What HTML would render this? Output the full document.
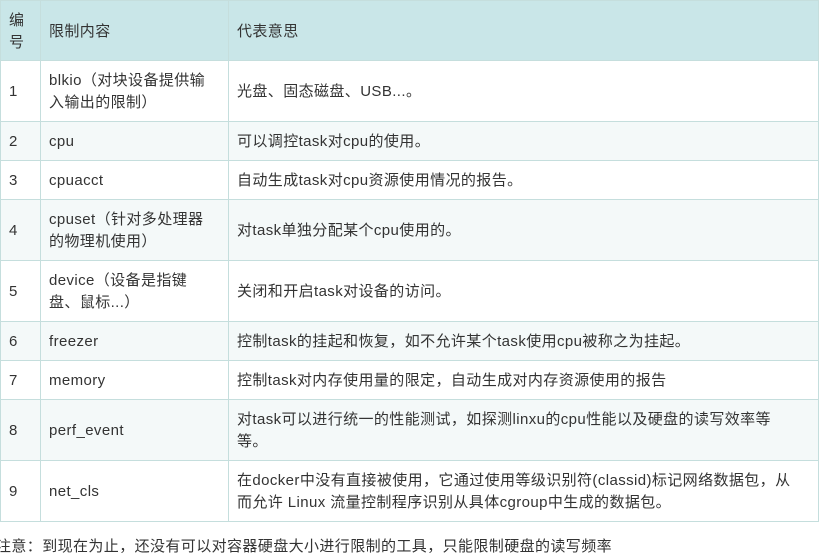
<!DOCTYPE html>
<html><head><meta charset="utf-8"><style>
body{margin:0;background:#fff;width:820px;height:552px;overflow:hidden;font-family:"Liberation Sans","Noto Sans CJK SC",sans-serif;font-size:15px;color:#333;}
table{border-collapse:collapse;position:absolute;left:0;top:0;width:819px;table-layout:fixed}
td{border:1px solid #c5dedd;padding:2px 12px 0 8px;line-height:22px;vertical-align:middle;letter-spacing:0.4px}
tr.h td{background:#c9e6e8}
tr.s td{background:#f4f9f9}
.n{position:absolute;left:-4px;top:536px;white-space:nowrap;line-height:22px;letter-spacing:0.4px}
</style></head><body>
<table>
<colgroup><col style="width:40px"><col style="width:188px"><col></colgroup>
<tr class="h" style="height:60px"><td>编号</td><td>限制内容</td><td>代表意思</td></tr>
<tr style="height:61px"><td>1</td><td>blkio（对块设备提供输入输出的限制）</td><td>光盘、固态磁盘、USB...。</td></tr>
<tr class="s" style="height:39px"><td>2</td><td>cpu</td><td>可以调控task对cpu的使用。</td></tr>
<tr style="height:39px"><td>3</td><td>cpuacct</td><td>自动生成task对cpu资源使用情况的报告。</td></tr>
<tr class="s" style="height:61px"><td>4</td><td>cpuset（针对多处理器的物理机使用）</td><td>对task单独分配某个cpu使用的。</td></tr>
<tr style="height:61px"><td>5</td><td>device（设备是指键盘、鼠标...）</td><td>关闭和开启task对设备的访问。</td></tr>
<tr class="s" style="height:39px"><td>6</td><td>freezer</td><td>控制task的挂起和恢复，如不允许某个task使用cpu被称之为挂起。</td></tr>
<tr style="height:39px"><td>7</td><td>memory</td><td>控制task对内存使用量的限定，自动生成对内存资源使用的报告</td></tr>
<tr class="s" style="height:61px"><td>8</td><td>perf_event</td><td>对task可以进行统一的性能测试，如探测linxu的cpu性能以及硬盘的读写效率等<br>等。</td></tr>
<tr style="height:61px"><td>9</td><td>net_cls</td><td>在docker中没有直接被使用，它通过使用等级识别符(classid)标记网络数据包，从<br>而允许 Linux 流量控制程序识别从具体cgroup中生成的数据包。</td></tr>
</table>
<div class="n">注意：到现在为止，还没有可以对容器硬盘大小进行限制的工具，只能限制硬盘的读写频率</div>
</body></html>
